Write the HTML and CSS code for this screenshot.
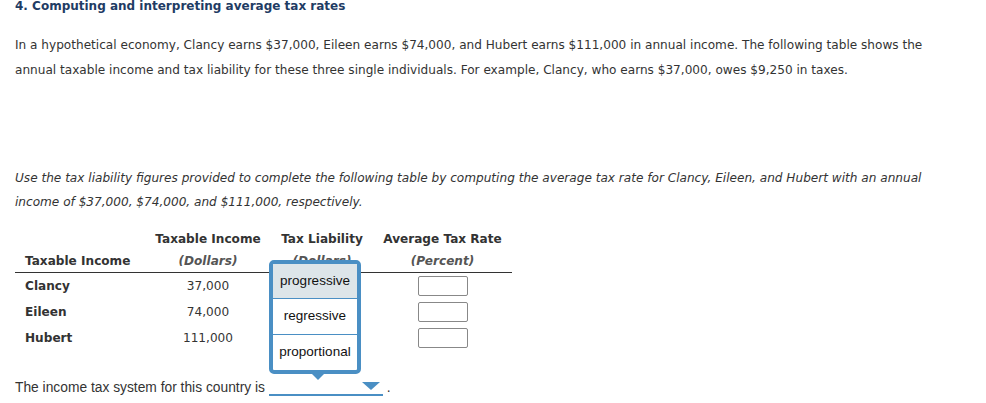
FILE: index.html
```html
<!DOCTYPE html>
<html lang="en">
<head>
    <meta charset="UTF-8">
    <title>Computing and interpreting average tax rates</title>
    <link rel="stylesheet" href="styles.css">
</head>
<body>
    <div class="page">
        <div class="title">4. Computing and interpreting average tax rates</div>

        <p class="intro">In a hypothetical economy, Clancy earns $37,000, Eileen earns $74,000, and Hubert earns $111,000 in annual income. The following table shows the annual taxable income and tax liability for these three single individuals. For example, Clancy, who earns $37,000, owes $9,250 in taxes.</p>

        <p class="task">Use the tax liability figures provided to complete the following table by computing the average tax rate for Clancy, Eileen, and Hubert with an annual income of $37,000, $74,000, and $111,000, respectively.</p>

        <div class="table-wrap">
            <table class="tax-table">
                <thead>
                    <tr>
                        <th class="name-col"></th>
                        <th>Taxable Income</th>
                        <th>Tax Liability</th>
                        <th>Average Tax Rate</th>
                    </tr>
                    <tr class="units">
                        <th class="name-col">Taxable Income</th>
                        <th><em>(Dollars)</em></th>
                        <th><em>(Dollars)</em></th>
                        <th><em>(Percent)</em></th>
                    </tr>
                </thead>
                <tbody>
                    <tr>
                        <td class="name-col">Clancy</td>
                        <td>37,000</td>
                        <td></td>
                        <td><input type="text" class="rate-input"></td>
                    </tr>
                    <tr>
                        <td class="name-col">Eileen</td>
                        <td>74,000</td>
                        <td></td>
                        <td><input type="text" class="rate-input"></td>
                    </tr>
                    <tr>
                        <td class="name-col">Hubert</td>
                        <td>111,000</td>
                        <td></td>
                        <td><input type="text" class="rate-input"></td>
                    </tr>
                </tbody>
            </table>

            <!-- open dropdown menu -->
            <div class="menu">
                <div class="menu-item active">progressive</div>
                <div class="menu-item">regressive</div>
                <div class="menu-item">proportional</div>
                <div class="menu-tip"></div>
            </div>
        </div>

        <div class="answer">
            The income tax system for this country is
            <span class="select">
                <svg class="caret" width="18" height="8" viewBox="0 0 18 8"><polygon points="0,0 18,0 9,8" fill="#4a8fc4"/></svg>
            </span>
            .
        </div>
    </div>
</body>
</html>
```

FILE: styles.css
```css
body {
    margin: 0;
    padding: 0;
    background: #fff;
    color: #333;
    font-family: "DejaVu Sans", Verdana, sans-serif;
    font-size: 12.1px;
}
.page {
    padding-left: 15px;
}
.title {
    font-size: 12px;
    font-weight: bold;
    line-height: 12px;
    color: #1f3c64;
}
.intro {
    margin: 21px 0 0;
    line-height: 25px;
    width: 940px;
}
.task {
    margin: 83px 0 0;
    line-height: 24px;
    font-style: italic;
    width: 940px;
}
.table-wrap {
    position: relative;
    width: 497px;
    margin-top: 14px;
}
.tax-table {
    border-collapse: collapse;
    width: 497px;
}
.tax-table th {
    font-weight: bold;
    text-align: center;
    height: 22px;
    padding: 0;
}
.tax-table th em {
    color: #555;
}
.tax-table .units th {
    border-bottom: 1.5px solid #333;
}
.tax-table td {
    text-align: center;
    height: 26px;
    padding: 0;
}
.tax-table .name-col {
    width: 130px;
    text-align: left;
    padding-left: 10px;
    box-sizing: border-box;
    font-weight: bold;
}
.tax-table th:nth-child(2) {
    width: 126px;
}
.tax-table th:nth-child(3) {
    width: 102px;
}
.rate-input {
    width: 50px;
    height: 20px;
    box-sizing: border-box;
    border: 1px solid #888;
    border-radius: 2px;
    display: block;
    margin: 0 auto;
    padding: 0;
}
.menu {
    position: absolute;
    left: 254px;
    top: 32px;
    width: 92px;
    box-sizing: border-box;
    border: 4px solid #4a8fc4;
    border-radius: 5px;
    background: #fff;
    font-family: "Liberation Sans", Arial, sans-serif;
    font-size: 13.5px;
}
.menu-item {
    height: 35px;
    line-height: 34px;
    text-align: center;
    color: #111;
    border-top: 1px solid #4a8fc4;
}
.menu-item:first-child {
    border-top: none;
    height: 34px;
}
.menu-item.active {
    background: #dde5e9;
}
.menu-tip {
    position: absolute;
    left: 38px;
    bottom: -10px;
    border-left: 7px solid transparent;
    border-right: 7px solid transparent;
    border-top: 7px solid #4a8fc4;
}
.answer {
    margin-top: 29px;
    font-family: "Liberation Sans", Arial, sans-serif;
    font-size: 13.8px;
    color: #333;
}
.select {
    display: inline-block;
    width: 114px;
    height: 14px;
    border-bottom: 2px solid #4a8fc4;
    vertical-align: -4px;
    position: relative;
}
.caret {
    position: absolute;
    right: 3px;
    top: 2px;
}
```
